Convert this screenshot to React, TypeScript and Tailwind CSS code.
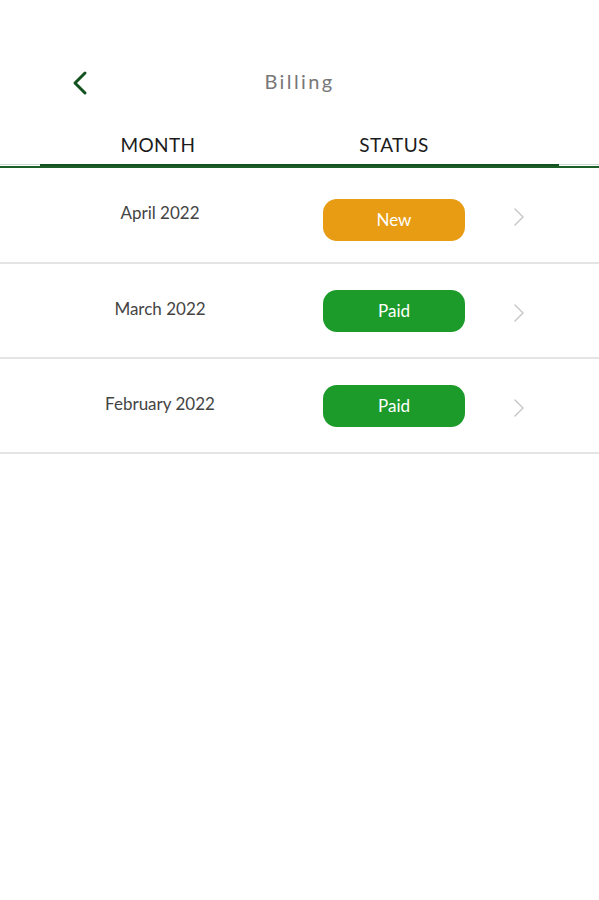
const ROWS = [
  { month: 'April 2022',    status: 'New',  color: 'bg-[#e89c14]', row: 'h-[96px]', badge: 'mt-[9px]' },
  { month: 'March 2022',    status: 'Paid', color: 'bg-[#1c9b2b]', row: 'h-[95px]', badge: 'mt-0' },
  { month: 'February 2022', status: 'Paid', color: 'bg-[#1c9b2b]', row: 'h-[95px]', badge: 'mt-[1px]' },
]

export default function App() {
  return (
    <div className="w-[599px] h-[900px] bg-white font-['Lato',sans-serif]">
      {/* Top bar */}
      <div className="pt-[56px] h-[108px] relative flex justify-center">
        <button className="absolute left-[70px] top-[70px] text-[#14531f]" aria-label="Back">
          <svg width="20" height="26" viewBox="0 0 20 26" fill="none">
            <path d="M15 3 L5 13 L15 23" stroke="currentColor" strokeWidth="3" strokeLinecap="round" strokeLinejoin="round" />
          </svg>
        </button>
        <h1 className="text-[20px] leading-[50px] tracking-[0.12em] text-[#777777]">Billing</h1>
      </div>

      {/* Column headers */}
      <div className="relative">
        <div className="flex h-[56px] items-center pt-[18px]">
          <div className="w-[316px] text-center text-[19px] text-[#1c1c1c] tracking-[0.02em]">MONTH</div>
          <div className="w-[156px] text-center text-[19px] text-[#1c1c1c] tracking-[0.02em]">STATUS</div>
        </div>
        <div className="h-[4px] relative">
          <div className="absolute left-0 right-0 top-0 h-[1px] bg-[#cfd8cf]" />
          <div className="absolute left-[40px] right-[40px] top-0 h-[3px] bg-[#14531f]" />
          <div className="absolute left-0 right-0 top-[2px] h-[2px] bg-[#1c5e27]" />
        </div>
      </div>

      {/* Rows */}
      {ROWS.map((row) => (
        <div key={row.month} className={`flex items-center ${row.row} border-b-2 border-[#e4e4e4]`}>
          <div className="w-[320px] text-center text-[17px] text-[#444444] -mt-[4px]">{row.month}</div>
          <div className={`w-[148px] flex justify-center ${row.badge}`}>
            <span className={`${row.color} w-[142px] h-[42px] rounded-[14px] flex items-center justify-center text-white text-[17px]`}>
              {row.status}
            </span>
          </div>
          <div className="ml-[44px] text-[#c8c8c8] mt-[4px]">
            <svg width="14" height="22" viewBox="0 0 14 22" fill="none">
              <path d="M3 3 L11 11 L3 19" stroke="currentColor" strokeWidth="1.5" strokeLinecap="round" strokeLinejoin="round" />
            </svg>
          </div>
        </div>
      ))}
    </div>
  )
}
